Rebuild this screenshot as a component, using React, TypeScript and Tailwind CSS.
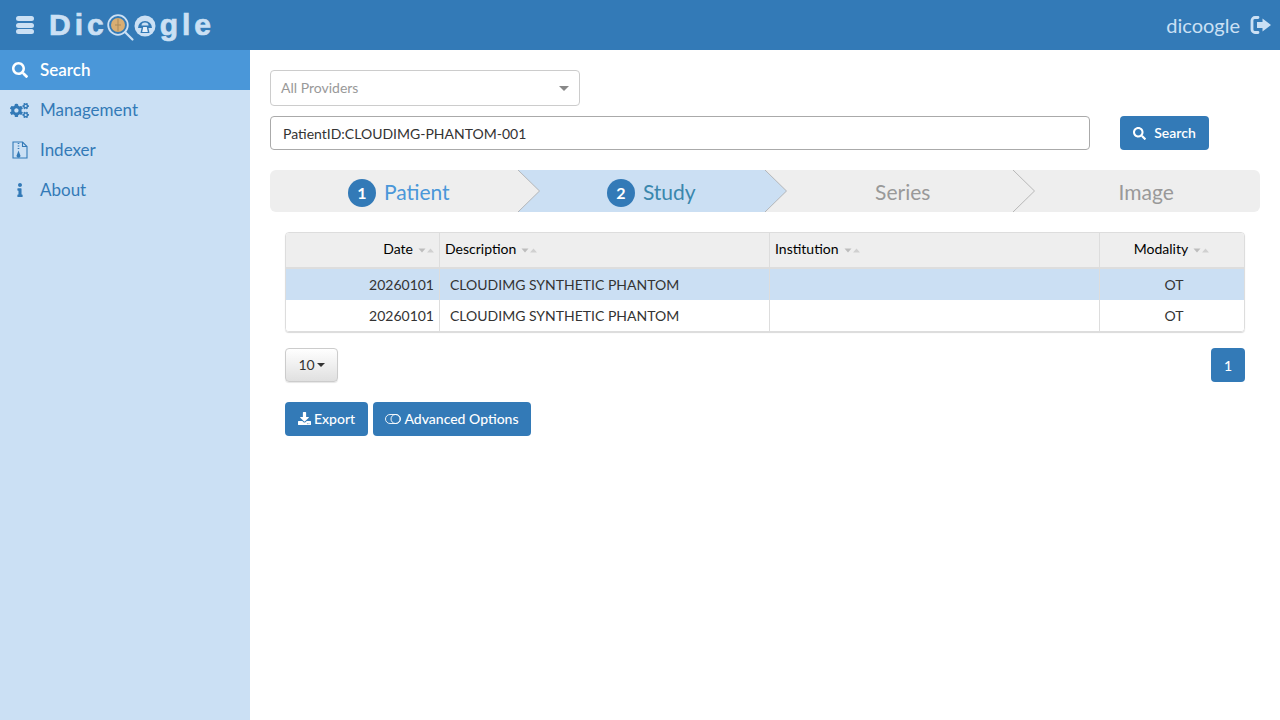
import React from "react";
import { FaSearch, FaCogs, FaInfo, FaDownload } from "react-icons/fa";

const font = { fontFamily: "Lato, sans-serif" };

function SortCaret() {
  return (
    <svg width="17" height="5" viewBox="0 0 17 5" className="inline-block ml-[5px] align-middle">
      <path d="M0.500 0.500h7L4 4.500z" fill="#bdbdbd" />
      <path d="M9 4.500h7L12.500 0.500z" fill="#d0d0d0" />
    </svg>
  );
}

function Arrow({ fill }: { fill: string }) {
  return (
    <svg width="23" height="42" viewBox="0 0 23 42" className="absolute left-full top-0 z-10">
      <path d="M0 0 L21.5 21 L0 42 Z" fill={fill} />
      <path d="M0 0 L21.5 21 L0 42" fill="none" stroke="#a9a9a9" strokeWidth="0.8" />
    </svg>
  );
}

function Step({ n, label, color, bg, pad, first, last, arrow }: { n?: number; label: string; color: string; bg: string; pad: string; first?: boolean; last?: boolean; arrow: boolean }) {
  return (
    <div
      className={`relative w-[247.5px] h-full flex items-center justify-center gap-[8px] pt-[3px] ${pad} ${first ? "rounded-l-[6px]" : ""} ${last ? "rounded-r-[6px]" : ""}`}
      style={{ backgroundColor: bg }}
    >
      {n ? (
        <span className="w-[28px] h-[28px] rounded-full bg-[#337ab7] text-white text-[16px] font-bold flex items-center justify-center">{n}</span>
      ) : null}
      <span className="text-[21px] leading-none -mt-[2px]" style={{ color }}>{label}</span>
      {arrow ? <Arrow fill={bg} /> : null}
    </div>
  );
}

function Row({ selected }: { selected?: boolean }) {
  const b = "border-r border-[#dddddd]";
  return (
    <tr className={selected ? "bg-[#cbdff3] h-[32px]" : "bg-white h-[31px]"}>
      <td className={`${b} text-right pr-[5px]`}>20260101</td>
      <td className={`${b} pl-[10px]`}>CLOUDIMG SYNTHETIC PHANTOM</td>
      <td className={b}></td>
      <td className="text-center pl-[4px]">OT</td>
    </tr>
  );
}

function Nav({ icon, label, active }: { icon: React.ReactNode; label: string; active?: boolean }) {
  return (
    <div className={`h-[40px] flex items-center text-[17px] ${active ? "bg-[#4a97d9] text-white font-semibold" : "text-[#337ab7]"}`}>
      <span className="w-[40px] flex justify-center pr-[1px]">{icon}</span>
      <span>{label}</span>
    </div>
  );
}

function IndexerIcon() {
  return (
    <svg width="16" height="18" viewBox="0 0 16 18" fill="none" stroke="#337ab7" strokeWidth="1.1">
      <path d="M1 1h9.500L15 5.500V17H1z" />
      <path d="M10.500 1v4.500H15" />
      <path d="M6.500 2v1M6.500 4.500v1M6.500 7v1" strokeWidth="1.6" />
      <path d="M6.500 9.500l1.800 4.800a1.900 1.900 0 1 1-3.600 0z" fill="#337ab7" stroke="none" />
    </svg>
  );
}

function Logo() {
  const letter = "font-bold text-[30px] leading-none tracking-[4px] text-[#cbe0f4] [-webkit-text-stroke:0.7px_#cbe0f4]";
  const f = { fontFamily: "'Liberation Sans', sans-serif" };
  return (
    <div className="flex items-center ml-[15px]">
      <span className={letter} style={f}>Dic</span>
      <svg width="52" height="34" viewBox="0 0 52 34" className="-ml-[2px] shrink-0">
        <circle cx="12" cy="17" r="9.800" fill="none" stroke="#cbe0f4" strokeWidth="1.800" />
        <circle cx="12" cy="17" r="7" fill="#d9ae73" />
        <path d="M12 10.500v13M9 17h6" stroke="#a98a5c" strokeWidth="1" />
        <path d="M19 24l7.500 7.500" stroke="#cbe0f4" strokeWidth="2.200" strokeLinecap="round" />
        <circle cx="39" cy="18" r="10.500" fill="#cbe0f4" />
        <path d="M32 20a7 7 0 0 1 14 0z" fill="#337ab7" />
        <path d="M35.500 17.500a3.500 3 0 0 1 7 0z" fill="#cbe0f4" />
        <path d="M34.500 25l1.500-7h6l1.500 7z" fill="#337ab7" />
        <path d="M36.200 24l1-5h3.600l1 5z" fill="#e8f1fa" />
      </svg>
      <span className={`${letter} ml-[2px]`} style={f}>gle</span>
    </div>
  );
}

export default function App() {
  return (
    <div className="w-[1280px] h-[720px] flex flex-col bg-white overflow-hidden" style={font}>
      <header className="h-[50px] bg-[#337ab7] flex items-center shrink-0">
        <div className="w-[18px] ml-[16px] flex flex-col gap-[1.5px]">
          <span className="h-[5px] rounded-[2.5px] bg-[#cbe0f4]" />
          <span className="h-[5px] rounded-[2.5px] bg-[#cbe0f4]" />
          <span className="h-[5px] rounded-[2.5px] bg-[#cbe0f4]" />
        </div>
        <Logo />
        <div className="ml-auto flex items-center text-[#cbe0f4] mr-[8px]">
          <span className="text-[20px]">dicoogle</span>
          <svg width="22" height="20" viewBox="0 0 22 20" className="ml-[10px]">
            <path d="M8 2.500H5a3 3 0 0 0-3 3v9a3 3 0 0 0 3 3h3" fill="none" stroke="#cbe0f4" strokeWidth="2.800" strokeLinecap="round" />
            <path d="M7 7h5.500V3.500L21 10l-8.500 6.500V13H7z" fill="#cbe0f4" />
          </svg>
        </div>
      </header>
      <div className="flex flex-1 min-h-0">
        <aside className="w-[250px] bg-[#cbe0f4] shrink-0">
          <Nav active icon={<FaSearch size={16} />} label="Search" />
          <Nav icon={<FaCogs size={19} />} label="Management" />
          <Nav icon={<IndexerIcon />} label="Indexer" />
          <Nav icon={<FaInfo size={14} />} label="About" />
        </aside>
        <main className="flex-1 px-[20px] pt-[20px] text-[14px] text-[#333333]">
          <div className="w-[310px] h-[36px] border border-[#cccccc] rounded-[4px] flex items-center justify-between pl-[10px] pr-[10px] pb-[2px] text-[#999999]">
            <span>All Providers</span>
            <span className="w-0 h-0 mt-[2px] border-x-[5px] border-x-transparent border-t-[5px] border-t-[#888888]" />
          </div>
          <div className="flex items-start mt-[10px]">
            <div className="w-[820px] h-[34px] border border-[#aaaaaa] rounded-[4px] flex items-center pl-[12px] text-[#333333]">PatientID:CLOUDIMG-PHANTOM-001</div>
            <button className="ml-[30px] w-[89px] h-[34px] bg-[#337ab7] rounded-[4px] text-white flex items-center justify-center gap-[8px] pb-[2px] font-semibold text-[14px]">
              <FaSearch size={13} className="mt-[2px]" />
              <span>Search</span>
            </button>
          </div>
          <div className="flex mt-[20px] h-[42px] w-[990px]">
            <Step first n={1} label="Patient" color="#4a97d9" bg="#eeeeee" pad="pl-[10px]" arrow />
            <Step n={2} label="Study" color="#3a87ad" bg="#cbdff3" pad="pl-[20px]" arrow />
            <Step label="Series" color="#999999" bg="#eeeeee" pad="pl-[28px]" arrow />
            <Step last label="Image" color="#999999" bg="#eeeeee" pad="pl-[20px]" arrow={false} />
          </div>
          <div className="mx-[15px] mt-[20px] w-[960px] border border-[#dddddd] rounded-[4px] overflow-hidden shadow-[0_1px_1px_rgba(0,0,0,0.15)]">
            <table className="w-full table-fixed border-collapse">
              <colgroup>
                <col className="w-[153.5px]" />
                <col className="w-[330px]" />
                <col className="w-[330px]" />
                <col />
              </colgroup>
              <thead>
                <tr className="h-[35px] bg-[#eeeeee] text-black border-b-[2px] border-[#dddddd]">
                  <th className="font-normal pb-[3px] border-r border-[#dddddd] text-right pr-[4px]">Date<SortCaret /></th>
                  <th className="font-normal pb-[3px] border-r border-[#dddddd] text-left pl-[5px]">Description<SortCaret /></th>
                  <th className="font-normal pb-[3px] border-r border-[#dddddd] text-left pl-[5px]">Institution<SortCaret /></th>
                  <th className="font-normal pb-[3px] text-center">Modality<SortCaret /></th>
                </tr>
              </thead>
              <tbody>
                <Row selected />
                <Row />
              </tbody>
            </table>
          </div>
          <div className="mx-[15px] w-[960px] mt-[16px] flex justify-between">
            <button className="w-[53px] h-[34px] border border-[#cccccc] rounded-[4px] bg-gradient-to-b from-white to-[#e0e0e0] shadow-[0_1px_1px_rgba(0,0,0,0.1)] text-[#333333] flex items-center justify-center gap-[2px] pb-[2px]">
              <span>10</span>
              <span className="w-0 h-0 mt-[2px] border-x-[4px] border-x-transparent border-t-[4px] border-t-[#333333]" />
            </button>
            <button className="w-[34px] h-[34px] bg-[#337ab7] rounded-[4px] text-white font-medium">1</button>
          </div>
          <div className="mx-[15px] mt-[20px] flex gap-[5px]">
            <button className="w-[83px] h-[34px] bg-[#337ab7] rounded-[4px] text-white font-medium flex items-center justify-center gap-[3px] pb-[2px]">
              <FaDownload size={13} className="mt-[1px]" />
              <span>Export</span>
            </button>
            <button className="w-[158px] h-[34px] bg-[#337ab7] rounded-[4px] text-white font-medium flex items-center justify-center gap-[3px] pb-[2px]">
              <svg width="16" height="10" viewBox="0 0 16 10" fill="none" stroke="white" strokeWidth="0.9" className="mt-[2px]">
                <rect x="0.500" y="0.500" width="15" height="9" rx="4.500" />
                <circle cx="10.500" cy="5" r="4.500" />
              </svg>
              <span>Advanced Options</span>
            </button>
          </div>
        </main>
      </div>
    </div>
  );
}
